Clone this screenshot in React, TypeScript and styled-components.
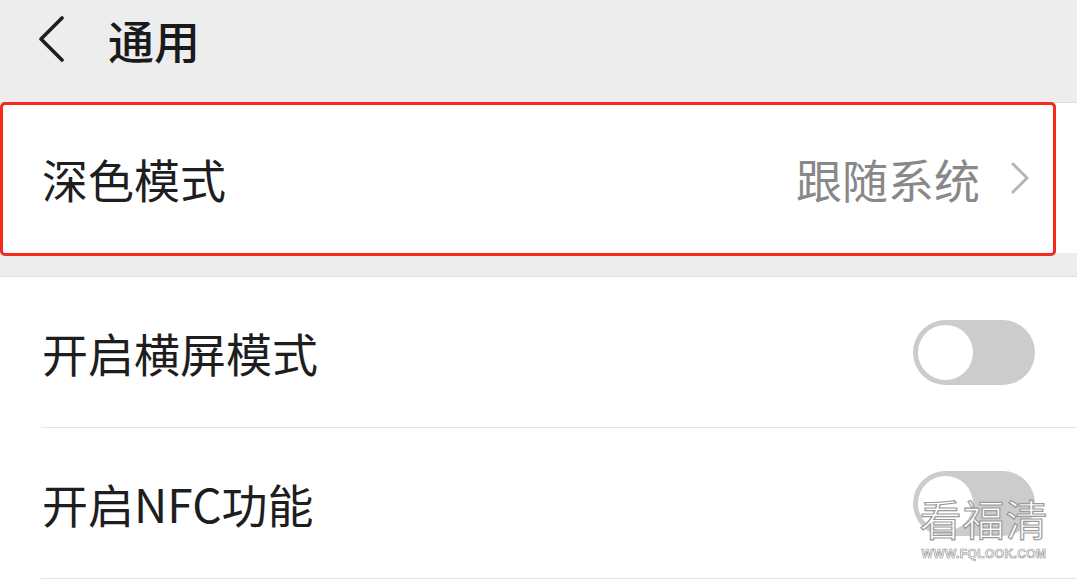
import React from "react";
import styled, { createGlobalStyle } from "styled-components";

const GlobalStyle = createGlobalStyle`
  html, body {
    margin: 0;
    padding: 0;
    background: #ffffff;
  }
  body {
    font-family: "Noto Sans CJK SC", "Noto Sans", sans-serif;
  }
`;

const Page = styled.div`
  position: relative;
  width: 1077px;
  height: 583px;
  overflow: hidden;
  background: #ededed;
  display: flex;
  flex-direction: column;
`;

const Header = styled.div`
  height: 78px;
  display: flex;
  align-items: center;
  padding-left: 38px;
  gap: 43px;
`;

const Title = styled.div`
  font-size: 46px;
  font-weight: 500;
  color: #1a1a1a;
  line-height: 1;
`;

type SectionProps = { $gap: number; $fill?: boolean };

const Section = styled.div`
  position: relative;
  margin-top: ${(props: SectionProps) => props.$gap}px;
  flex: ${(props: SectionProps) => (props.$fill ? 1 : "none")};
  background: #ffffff;
  border-top: 1px solid #dedede;
`;

const Row = styled.div`
  height: 150px;
  display: flex;
  align-items: center;
  padding-left: 42px;
  padding-right: 42px;
  position: relative;

  & + & {
    border-top: 1px solid #e3e3e3;
    margin-left: 41px;
    padding-left: 1px;
  }
`;

const LinkRow = styled(Row)`
  padding-right: 47px;
`;

const LastDivider = styled.div`
  height: 1px;
  margin-left: 41px;
  background: #e3e3e3;
`;

const Label = styled.div`
  flex: 1;
  font-size: 46px;
  color: #1e1e1e;
  line-height: 1;
`;

const Value = styled.div`
  font-size: 46px;
  color: #888888;
  line-height: 1;
  margin-right: 30px;
`;

const Highlight = styled.div`
  position: absolute;
  left: 0;
  right: 21px;
  top: -1px;
  bottom: -3px;
  border: 3px solid #f52a1f;
  border-radius: 5px;
  pointer-events: none;
`;

type ToggleProps = { $on?: boolean };

const Toggle = styled.div`
  width: 122px;
  height: 65px;
  border-radius: 33px;
  background: ${(props: ToggleProps) => (props.$on ? "#07c160" : "#cccccc")};
  display: flex;
  align-items: center;
  padding: 0 5px;
  box-sizing: border-box;
`;

const Knob = styled.div`
  width: 55px;
  height: 55px;
  border-radius: 50%;
  background: #ffffff;
`;

const Watermark = styled.div`
  position: absolute;
  left: 918px;
  top: 496px;
  width: 132px;
  display: flex;
  flex-direction: column;
  align-items: center;
  gap: 8px;
  pointer-events: none;
`;

const MarkTitle = styled.div`
  font-size: 42px;
  line-height: 44px;
  color: #ffffff;
  -webkit-text-stroke: 1.2px #9a9a9a;
  letter-spacing: 1px;
`;

const MarkUrl = styled.div`
  font-family: "Liberation Sans", Arial, sans-serif;
  font-weight: 700;
  font-size: 12px;
  line-height: 12px;
  color: #ffffff;
  -webkit-text-stroke: 0.6px #8a8a8a;
  letter-spacing: 0.4px;
`;

const BackIcon = () => (
  <svg width="27" height="46" viewBox="0 0 27 46">
    <polyline
      points="24,2 3,23 24,44"
      fill="none"
      stroke="#1e1e1e"
      strokeWidth="3.6"
      strokeLinecap="round"
      strokeLinejoin="round"
    />
  </svg>
);

const ArrowIcon = () => (
  <svg width="20" height="34" viewBox="0 0 20 34">
    <polyline
      points="3,3 17,17 3,31"
      fill="none"
      stroke="#b5b5b5"
      strokeWidth="3"
      strokeLinecap="round"
      strokeLinejoin="round"
    />
  </svg>
);

export default function App() {
  return (
    <>
      <GlobalStyle />
      <Page>
        <Header>
          <BackIcon />
          <Title>通用</Title>
        </Header>

        <Section $gap={24}>
          <LinkRow>
            <Label>深色模式</Label>
            <Value>跟随系统</Value>
            <ArrowIcon />
          </LinkRow>
          <Highlight />
        </Section>

        <Section $gap={23} $fill>
          <Row>
            <Label>开启横屏模式</Label>
            <Toggle>
              <Knob />
            </Toggle>
          </Row>
          <Row>
            <Label>开启NFC功能</Label>
            <Toggle>
              <Knob />
            </Toggle>
          </Row>
          <LastDivider />
        </Section>

        <Watermark>
          <MarkTitle>看福清</MarkTitle>
          <MarkUrl>WWW.FQLOOK.COM</MarkUrl>
        </Watermark>
      </Page>
    </>
  );
}
